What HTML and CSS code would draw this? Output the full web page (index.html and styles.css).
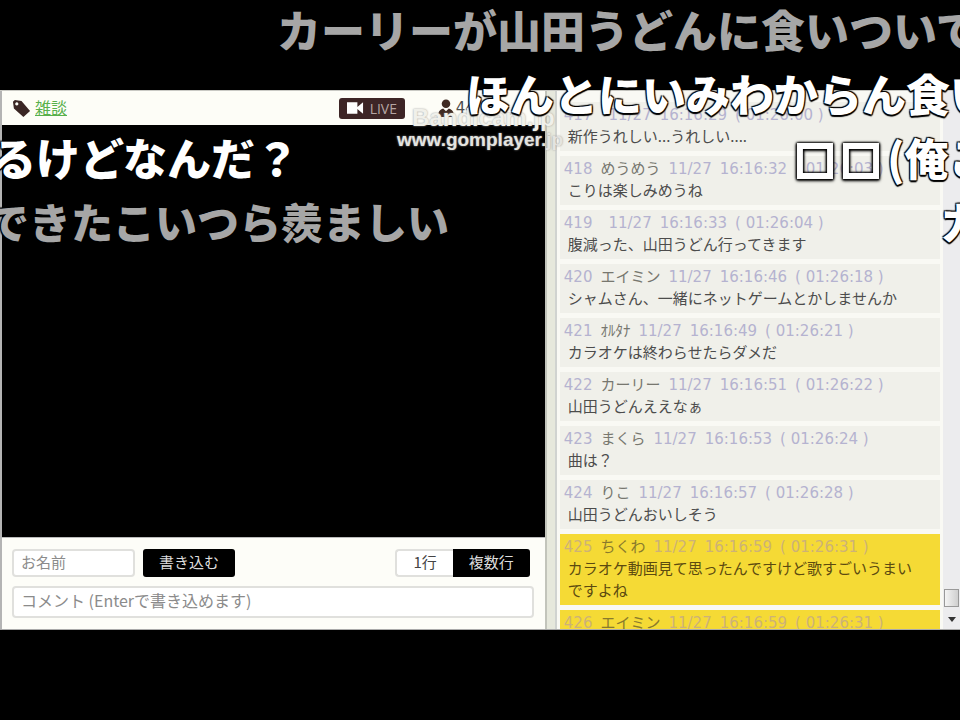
FILE: index.html
```html
<!DOCTYPE html>
<html lang="ja">
<head>
  <meta charset="UTF-8" />
  <meta name="viewport" content="width=device-width, initial-scale=1.0" />
  <title>雑談 - LIVE</title>
  <link rel="stylesheet" href="styles.css">
</head>
<body>
  <div class="window">
    <main class="live">
      <header class="live-header">
        <svg class="icon-tag" viewBox="0 0 20 20" aria-hidden="true">
          <path fill="#3a2624" fill-rule="evenodd" d="M1 3 L3 1 L10 2 L19 12.500 L12 19 L2 10 Z M5 3.500 a1.700 1.700 0 1 0 .1 0 Z"/>
        </svg>
        <a class="category" href="#">雑談</a>
        <span class="badge">
          <svg class="icon-camera" viewBox="0 0 18 12" aria-hidden="true">
            <path fill="#fff" d="M0 0h11v12H0z M11 5 L17 0 V12 L11 7z"/>
          </svg>
          LIVE
        </span>
        <span class="viewers">
          <svg class="icon-user" viewBox="0 0 18 20" aria-hidden="true">
            <circle cx="9" cy="5" r="4.500" fill="#3f2a22"/>
            <path fill="#3f2a22" d="M1 19 V15 Q2 11 6 10 L9 13 L12 10 Q16 11 17 15 V19z"/>
          </svg>
          44
        </span>
      </header>

      <div class="video"></div>

      <form class="post">
        <div class="post-row">
          <input class="field name" type="text" placeholder="お名前" aria-label="お名前">
          <button class="btn dark submit" type="button">書き込む</button>
          <div class="lines">
            <button class="btn light" type="button">1行</button>
            <button class="btn dark" type="button">複数行</button>
          </div>
        </div>
        <input class="field comment" type="text" placeholder="コメント (Enterで書き込めます)" aria-label="コメント">
      </form>
    </main>

    <div class="splitter"></div>

    <section class="chat">
      <ol class="messages">
        <li>
          <p class="meta"><span>417</span><b></b><span>11/27</span><span>16:16:29</span><span>( 01:26:00 )</span></p>
          <p class="text">新作うれしい...うれしい....</p>
        </li>
        <li>
          <p class="meta"><span>418</span><b>めうめう</b><span>11/27</span><span>16:16:32</span><span>( 01:26:03 )</span></p>
          <p class="text">こりは楽しみめうね</p>
        </li>
        <li>
          <p class="meta"><span>419</span><b></b><span>11/27</span><span>16:16:33</span><span>( 01:26:04 )</span></p>
          <p class="text">腹減った、山田うどん行ってきます</p>
        </li>
        <li>
          <p class="meta"><span>420</span><b>エイミン</b><span>11/27</span><span>16:16:46</span><span>( 01:26:18 )</span></p>
          <p class="text">シャムさん、一緒にネットゲームとかしませんか</p>
        </li>
        <li>
          <p class="meta"><span>421</span><b>ｵﾙﾀﾅ</b><span>11/27</span><span>16:16:49</span><span>( 01:26:21 )</span></p>
          <p class="text">カラオケは終わらせたらダメだ</p>
        </li>
        <li>
          <p class="meta"><span>422</span><b>カーリー</b><span>11/27</span><span>16:16:51</span><span>( 01:26:22 )</span></p>
          <p class="text">山田うどんええなぁ</p>
        </li>
        <li>
          <p class="meta"><span>423</span><b>まくら</b><span>11/27</span><span>16:16:53</span><span>( 01:26:24 )</span></p>
          <p class="text">曲は？</p>
        </li>
        <li>
          <p class="meta"><span>424</span><b>りこ</b><span>11/27</span><span>16:16:57</span><span>( 01:26:28 )</span></p>
          <p class="text">山田うどんおいしそう</p>
        </li>
        <li class="new">
          <p class="meta"><span>425</span><b>ちくわ</b><span>11/27</span><span>16:16:59</span><span>( 01:26:31 )</span></p>
          <p class="text">カラオケ動画見て思ったんですけど歌すごいうまいですよね</p>
        </li>
        <li class="new">
          <p class="meta"><span>426</span><b>エイミン</b><span>11/27</span><span>16:16:59</span><span>( 01:26:31 )</span></p>
        </li>
      </ol>
      <div class="scrollbar">
        <div class="thumb"></div>
        <svg class="arrow" viewBox="0 0 8 5" aria-hidden="true"><path fill="#333" d="M0 0h8L4 5z"/></svg>
      </div>
    </section>
  </div>

  <div class="overlay">
    <span class="mark bandicam">Bandicam.jp</span>
    <span class="mark gom">www.gomplayer.jp</span>
    <span class="flow gray flow-1">カーリーが山田うどんに食いついてる</span>
    <span class="flow flow-2">ほんとにいみわからん食いつ</span>
    <span class="flow flow-3">るけどなんだ？</span>
    <span class="flow flow-4"><span class="box">□</span><span class="box">□</span>(俺こ</span>
    <span class="flow gray flow-5">できたこいつら羨ましい</span>
    <span class="flow flow-6">カ</span>
  </div>
</body>
</html>
```

FILE: styles.css
```css
* {
  box-sizing: border-box;
}

body {
  margin: 0;
  height: 100vh;
  padding: 90px 0;
  display: flex;
  position: relative;
  overflow: hidden;
  background-color: #000;
  color: #4c4c4c;
  font-family: "DejaVu Sans", "Noto Sans CJK JP", sans-serif;
  font-size: 15px;
}

.window {
  flex: 1;
  display: flex;
  min-width: 0;
  border-top: 1px solid #c9c9c4;
  border-bottom: 1px solid #aaa;
  background-color: #fdfdf8;
}

/* left side */
.live {
  flex: 1;
  min-width: 0;
  display: flex;
  flex-direction: column;
  border-left: 2px solid #b4b4b4;
}

.live-header {
  height: 34px;
  padding-left: 10px;
  display: flex;
  align-items: center;
  background-color: #fdfdf7;
}

.icon-tag {
  width: 19px;
  height: 19px;
  margin-right: 4px;
}

.category {
  padding-bottom: 2px;
  color: #58b04c;
  font-family: "Noto Sans CJK JP", sans-serif;
  font-size: 16px;
  line-height: 24px;
}

.badge {
  width: 66px;
  height: 21px;
  margin-left: auto;
  display: flex;
  align-items: center;
  justify-content: center;
  gap: 6px;
  border-radius: 3px;
  background-color: #3d2526;
  color: #b5a5a3;
  font-family: "Open Sans", sans-serif;
  font-size: 14px;
}

.icon-camera {
  width: 17px;
  height: 12px;
}

.viewers {
  width: 140px;
  padding-left: 32px;
  display: flex;
  align-items: center;
  gap: 1px;
}

.icon-user {
  width: 18px;
  height: 19px;
}

.video {
  flex: 1;
  background-color: #000;
}

.post {
  padding: 11px 11px 11px 10px;
  display: flex;
  flex-direction: column;
  gap: 9px;
  border-top: 1px solid #bbb;
}

.post-row {
  display: flex;
  gap: 8px;
}

.field {
  height: 32px;
  padding: 0 7px 4px;
  border: 2px solid #e0e0dd;
  border-radius: 4px;
  background-color: #fff;
  font-family: "Noto Sans CJK JP", sans-serif;
  font-size: 16px;
}

.field::placeholder {
  color: #8b8b8b;
  opacity: 1;
}

.name {
  width: 123px;
  height: 28px;
  font-size: 15px;
}

.btn {
  height: 28px;
  padding: 0 16px 3px;
  border: 0;
  font-family: "Noto Sans CJK JP", sans-serif;
  font-size: 15px;
}

.dark {
  background-color: #000;
  color: #ddd;
}

.light {
  border: 2px solid #e0e0dd;
  border-right: 0;
  border-radius: 4px 0 0 4px;
  background-color: #fff;
  color: #444;
}

.submit {
  border-radius: 3px;
}

.lines {
  margin-left: auto;
  margin-right: 4px;
  display: flex;
}

.lines .dark {
  border-radius: 0 3px 3px 0;
}

.splitter {
  width: 12px;
  border-left: 2px solid #c2c4bb;
  border-right: 2px solid #d0d3d0;
  background-color: #e6e8dc;
}

/* right side */
.chat {
  width: 42%;
  min-height: 0;
  display: flex;
  overflow: hidden;
}

.messages {
  flex: 1;
  min-width: 0;
  margin: 0;
  padding: 11px 3px 0;
  display: flex;
  flex-direction: column;
  gap: 5px;
  overflow: hidden;
  list-style: none;
  background-color: #f9f9f4;
}

.messages li {
  flex: none;
  padding: 3px 4px 4px;
  background-color: #f0f0ea;
}

.messages p {
  margin: 0;
}

.messages .meta {
  display: flex;
  gap: 8px;
  color: #b5b3d0;
  line-height: 20px;
  white-space: nowrap;
}

.meta b {
  color: #77776f;
  font-weight: normal;
}

.messages .text {
  padding: 0 12px 0 4px;
  font-family: "Noto Sans CJK JP", sans-serif;
  line-height: 22px;
}

.messages .new {
  background-color: #f5da35;
}

.new .meta {
  color: #cdb277;
}

.new b {
  color: #8a7a2c;
}

.new .text {
  color: #5c4a10;
}

.scrollbar {
  width: 17px;
  padding-bottom: 7px;
  display: flex;
  flex-direction: column;
  align-items: center;
  justify-content: flex-end;
  gap: 10px;
  background-color: #ececee;
}

.thumb {
  width: 15px;
  height: 18px;
  border: 1px solid #999;
  background: linear-gradient(to right, #f4f4f4, #cfcfcf);
}

.arrow {
  width: 8px;
  height: 5px;
}

/* comments flowing over the screen */
.overlay {
  position: absolute;
  inset: 0;
  overflow: hidden;
  pointer-events: none;
}

.flow {
  position: absolute;
  color: #fff;
  font-family: "Noto Sans CJK JP", sans-serif;
  font-size: 44px;
  font-weight: 900;
  line-height: 58px;
  white-space: nowrap;
  text-shadow: 1px 1px 1px #000, -1px -1px 1px #000, 1px -1px 1px #000, -1px 1px 1px #000, 0 2px 1px #000;
}

.flow .box {
  display: inline-block;
  padding-right: 6px;
  font-size: 40px;
  text-shadow: none;
  -webkit-text-stroke: 4px #fff;
  filter: drop-shadow(0 0 1px #000) drop-shadow(0 0 1px #000) drop-shadow(0 1px 1px #000);
}

.gray {
  color: #a6a6a6;
}

.flow-1 { top: 0; left: 277px; }
.flow-2 { top: 64px; left: 466px; }
.flow-3 { top: 128px; left: -8px; }
.flow-4 { top: 128px; left: 795px; }
.flow-5 { top: 192px; left: -13px; font-size: 42px; }
.flow-6 { top: 192px; left: 940px; }

.mark {
  position: absolute;
  font-family: "Liberation Sans", sans-serif;
  font-weight: bold;
  white-space: nowrap;
  color: #e4e4e0;
  text-shadow: 0 0 2px #999;
}

.bandicam {
  top: 104px;
  left: 412px;
  color: #f0f0ea;
  font-size: 24px;
}

.gom {
  top: 129px;
  left: 397px;
  font-size: 19px;
}
```
